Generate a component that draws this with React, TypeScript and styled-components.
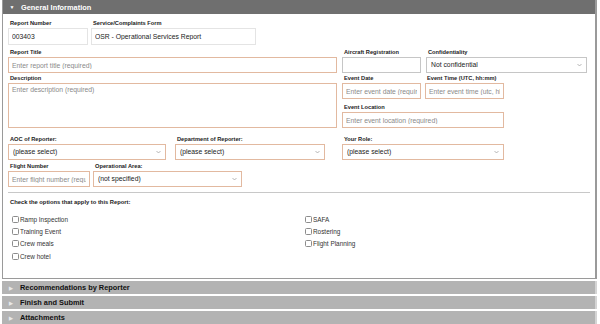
import React from "react";
import styled, { createGlobalStyle } from "styled-components";

const Global = createGlobalStyle`
  html, body { margin: 0; padding: 0; background: #ffffff; }
  body { font-family: "Liberation Sans", Arial, Helvetica, sans-serif; }
  * { box-sizing: border-box; }
`;

const Page = styled.div`
  width: 600px;
  height: 324px;
  padding: 0 3px 0 2px;
  display: flex;
  flex-direction: column;
  gap: 2px;
  background: #ffffff;
`;

const Panel = styled.section`
  display: flex;
  flex-direction: column;
  border: 1px solid #9a9a9a;
  border-top: none;
  border-right-width: 2px;
  height: 282px;
`;

const Header = styled.div<{ $open?: boolean }>`
  height: ${(p) => (p.$open ? "14px" : "13px")};
  display: flex;
  align-items: center;
  padding-left: 5px;
  gap: 5px;
  background: ${(p) => (p.$open ? "#6f6f6f" : "#b3b3b3")};
  color: ${(p) => (p.$open ? "#ffffff" : "#111111")};
  font-weight: bold;
  font-size: 7.4px;
`;

const Caret = styled.span<{ $open?: boolean }>`
  width: 8px;
  display: inline-flex;
  justify-content: center;
  color: ${(p) => (p.$open ? "#ffffff" : "#e8e8e8")};
  font-size: 5px;
`;

const Body = styled.div`
  flex: 1;
  padding: 6px 5px 0 5px;
  display: flex;
  flex-direction: column;
  background: #ffffff;
`;

const Row = styled.div<{ $gap?: number; $mb?: number }>`
  display: flex;
  align-items: flex-start;
  gap: ${(p) => p.$gap ?? 4}px;
  margin-bottom: ${(p) => p.$mb ?? 5}px;
`;

const Column = styled.div<{ $gap?: number }>`
  display: flex;
  flex-direction: column;
  gap: ${(p) => p.$gap ?? 4}px;
`;

const FieldBox = styled.div<{ $w: number; $ml?: number }>`
  width: ${(p) => p.$w}px;
  margin-left: ${(p) => p.$ml ?? 0}px;
  display: flex;
  flex-direction: column;
`;

const Label = styled.label`
  display: block;
  font-size: 5.7px;
  font-weight: bold;
  color: #222;
  line-height: 7px;
  height: 7px;
  margin-bottom: 1px;
  padding-left: 2px;
  white-space: nowrap;
`;

const Input = styled.input<{ $req?: boolean; $soft?: boolean }>`
  display: block;
  margin: 0;
  width: 100%;
  height: ${(p) => (p.$soft ? "17px" : "16px")};
  border: 1px solid
    ${(p) => (p.$req ? "#e2b9a0" : p.$soft ? "#e4e4e4" : "#c6c6c6")};
  padding: 0 3px;
  font-family: inherit;
  font-size: 6.8px;
  color: #222;
  background: #fff;
  outline: none;
  &::placeholder {
    color: #8a8a8a;
  }
`;

const TextArea = styled.textarea<{ $h: number }>`
  display: block;
  margin: 0;
  width: 100%;
  height: ${(p) => p.$h}px;
  border: 1px solid #e2b9a0;
  padding: 2px 3px;
  font-family: inherit;
  font-size: 6.8px;
  resize: none;
  outline: none;
  &::placeholder {
    color: #8a8a8a;
  }
`;

const SelectWrap = styled.div`
  position: relative;
  width: 100%;
  height: 16px;
`;

const Select = styled.select<{ $req?: boolean }>`
  display: block;
  margin: 0;
  width: 100%;
  height: 16px;
  line-height: 14px;
  appearance: none;
  -webkit-appearance: none;
  border: 1px solid ${(p) => (p.$req ? "#e2b9a0" : "#c6c6c6")};
  border-radius: 0;
  padding: 0 12px 0 4px;
  font-family: inherit;
  font-size: 6.8px;
  color: #222;
  background: #fff;
  outline: none;
`;

const Chevron = styled.svg`
  position: absolute;
  right: 5px;
  top: 6px;
  width: 5px;
  height: 4px;
  pointer-events: none;
`;

const Rule = styled.hr`
  border: none;
  border-top: 1px solid #c8c8c8;
  margin: 5px 2px 0 0;
  width: 582px;
`;

const SectionLabel = styled.div`
  font-size: 5.8px;
  font-weight: bold;
  color: #222;
  line-height: 7px;
  padding-left: 2px;
  margin-top: 6px;
  margin-bottom: 7px;
`;

const CheckGrid = styled.div`
  display: grid;
  grid-template-columns: 293px 200px;
  grid-auto-flow: column;
  grid-template-rows: repeat(4, 12.4px);
  padding-left: 4px;
`;

const CheckItem = styled.label`
  display: flex;
  align-items: center;
  gap: 1px;
  font-size: 6.4px;
  color: #333;
  height: 12.4px;
`;

const Box = styled.span`
  width: 7px;
  height: 7px;
  border: 1px solid #8c8c8c;
  border-radius: 1.5px;
  background: #fff;
  display: inline-block;
`;

const Collapsed = styled.div`
  border-right: 2px solid #d4d4d4;
`;

function Chev() {
  return (
    <Chevron viewBox="0 0 5 4">
      <path d="M0.5 1 L2.5 3 L4.5 1" fill="none" stroke="#9a9a9a" strokeWidth="0.7" />
    </Chevron>
  );
}

function Field(props: { label: string; w: number; ml?: number; children: React.ReactNode }) {
  return (
    <FieldBox $w={props.w} $ml={props.ml}>
      <Label>{props.label}</Label>
      {props.children}
    </FieldBox>
  );
}

function Sel(props: { value: string; req?: boolean }) {
  return (
    <SelectWrap>
      <Select $req={props.req} defaultValue={props.value}>
        <option>{props.value}</option>
      </Select>
      <Chev />
    </SelectWrap>
  );
}

const checks = [
  "Ramp Inspection",
  "Training Event",
  "Crew meals",
  "Crew hotel",
  "SAFA",
  "Rostering",
  "Flight Planning",
];

export default function App() {
  return (
    <>
      <Global />
      <Page>
        <Panel>
          <Header $open>
            <Caret $open>▼</Caret>
            General Information
          </Header>
          <Body>
            <Row $gap={3} $mb={4}>
              <Field label="Report Number" w={80}>
                <Input $soft defaultValue="003403" readOnly />
              </Field>
              <Field label="Service/Complaints Form" w={165}>
                <Input $soft defaultValue="OSR - Operational Services Report" readOnly />
              </Field>
            </Row>
            <Row $gap={5} $mb={2}>
              <Field label="Report Title" w={329}>
                <Input $req placeholder="Enter report title (required)" />
              </Field>
              <Field label="Aircraft Registration" w={79}>
                <Input />
              </Field>
              <Field label="Confidentiality" w={161}>
                <Sel value="Not confidential" />
              </Field>
            </Row>
            <Row $gap={5} $mb={8}>
              <Field label="Description" w={329}>
                <TextArea $h={45} placeholder="Enter description (required)" />
              </Field>
              <Column $gap={5}>
                <Row $gap={4} $mb={0}>
                  <Field label="Event Date" w={79}>
                    <Input $req placeholder="Enter event date (required)" />
                  </Field>
                  <Field label="Event Time (UTC, hh:mm)" w={79}>
                    <Input $req placeholder="Enter event time (utc, hh:mm)" />
                  </Field>
                </Row>
                <Field label="Event Location" w={162}>
                  <Input $req placeholder="Enter event location (required)" />
                </Field>
              </Column>
            </Row>
            <Row $gap={9} $mb={3}>
              <Field label="AOC of Reporter:" w={158}>
                <Sel value="(please select)" req />
              </Field>
              <Field label="Department of Reporter:" w={150}>
                <Sel value="(please select)" req />
              </Field>
              <Field label="Your Role:" w={162} ml={8}>
                <Sel value="(please select)" req />
              </Field>
            </Row>
            <Row $gap={3} $mb={0}>
              <Field label="Flight Number" w={82}>
                <Input $req placeholder="Enter flight number (required)" />
              </Field>
              <Field label="Operational Area:" w={149}>
                <Sel value="(not specified)" req />
              </Field>
            </Row>
            <Rule />
            <SectionLabel>Check the options that apply to this Report:</SectionLabel>
            <CheckGrid>
              {checks.map((c) => (
                <CheckItem key={c}>
                  <Box />
                  {c}
                </CheckItem>
              ))}
            </CheckGrid>
          </Body>
        </Panel>
        {["Recommendations by Reporter", "Finish and Submit", "Attachments"].map((t) => (
          <Collapsed key={t}>
            <Header>
              <Caret>▶</Caret>
              {t}
            </Header>
          </Collapsed>
        ))}
      </Page>
    </>
  );
}
